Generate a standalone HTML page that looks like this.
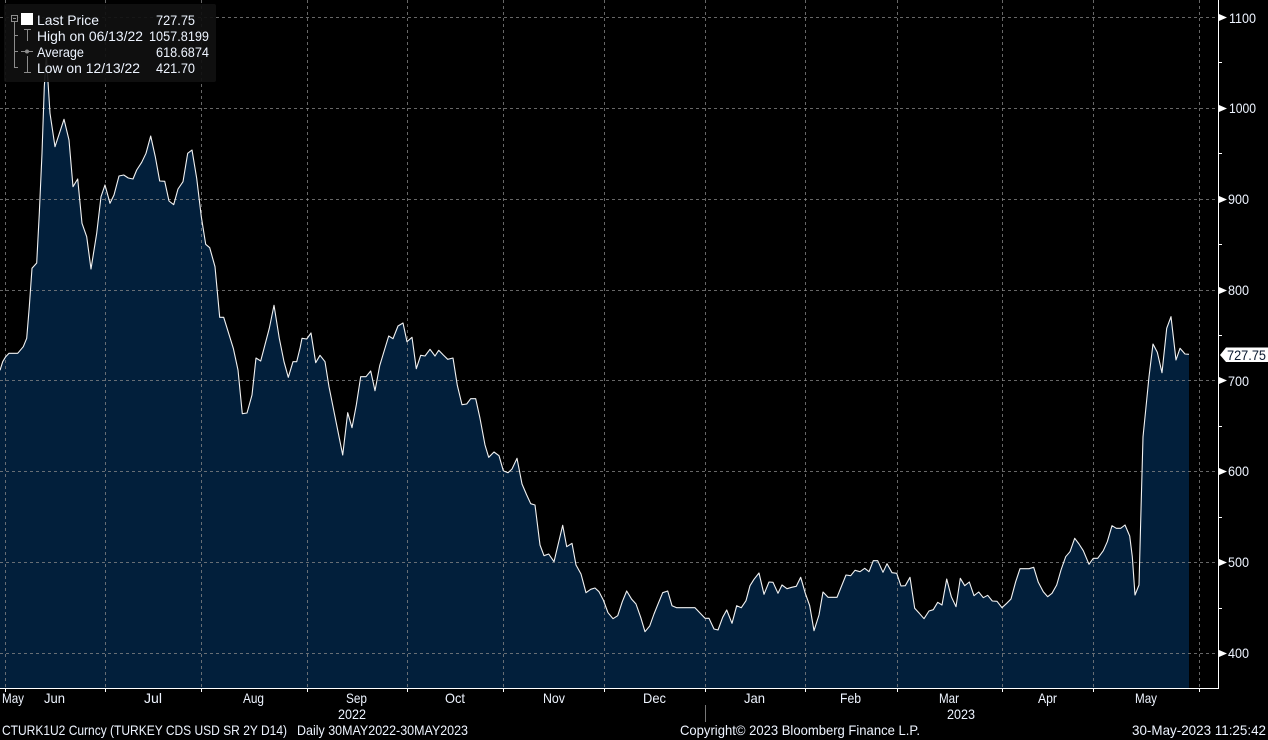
<!DOCTYPE html>
<html lang="en">
<head>
<meta charset="utf-8">
<title>CTURK1U2 Curncy</title>
<style>
html,body{margin:0;padding:0;background:#000;width:1268px;height:740px;overflow:hidden}
svg{display:block}
text{font-family:"Liberation Sans",sans-serif;font-size:14px;fill:#eef4ff}
</style>
</head>
<body>
<svg xmlns="http://www.w3.org/2000/svg" width="1268" height="740" viewBox="0 0 1268 740">
<rect width="1268" height="740" fill="#000"/>

<!-- area fill -->
<polygon fill="#021f3b" points="0,688 0,370.3 2.7,361.7 5.7,356.7 9,353.3 17.7,353.3 23.3,346.7 26.7,338.3 29.3,306.7 32,268.3 36.7,263 39.3,213.3 42,153.3 44.3,86.7 46.3,55 50,113.3 55,146.7 64,119.3 69,140 73,186.7 77.7,179 82,223.3 86.7,236.7 91,269 96.7,233.3 101,196.7 105,185 110,203.3 114,195 119,176 123.7,175 128.3,178 133,179 136.7,170 141.7,162.3 146,153.3 150.7,136 155.3,156.7 159.7,181 164.7,181.3 169,201 173.7,204.7 178,189 183,181.7 187.7,153.3 192,150 196.7,178.3 201.3,216.7 205.7,244.3 209.7,247.7 215,266.7 219.7,317.3 223.7,317.3 233.3,348.3 238,370 242.3,413.7 247,413 252,395 256,358 260.7,361 269.3,328.3 274,305.3 279.3,338.3 284,361.7 288.3,377.3 293,361.7 296.7,361.7 300,348.3 302,338.3 306.7,339 311,333 315.7,362.7 320,355.3 325,361.7 329,386.7 342.7,455 347.7,412.7 352,427.7 356.3,405 360.7,376.7 366,376.7 370.7,371 375,390.7 379.7,365.7 388.7,336 393,338.7 398,326 403,323 407,341.7 412,337.3 416.3,368.7 420.7,355.3 425,356 430,349.3 435,356 438.7,350.3 443.3,355 447.7,359.3 453,358 457.3,385.3 462,404.7 466.7,404 470.7,398.7 475.7,398.7 480,418.3 485,445 488.7,457.3 494,452 499,455.7 503.3,470.7 508,472.7 512,469 517,458.3 522,484 526.7,495 530.7,503.7 535,505 540,545 544,555.7 548.7,554 554,561.7 562.7,525.3 566.7,546.7 572,543.3 576,565 581,574 586,592.7 590.7,589.3 595,588 599,591.7 603.3,600 608,612.7 613,618.7 617.7,615.7 622.3,601.7 626.7,591 631.7,599.3 636,604 640.7,617.3 645,631.7 649.7,626 654,614 658.3,603.3 662.7,592.7 667.7,591 672,605.7 676.7,607.7 695,607.7 705,618.3 709,618.3 714,629 718,630 722.7,617.3 726.7,610 732,623.3 736.7,605.7 741.3,607.7 746,600.7 750,585.7 754,579.3 759,573 764,594.3 769,582 773,582.3 778,593.3 782,585 787,588.7 791.7,587.3 796.3,586.3 800.7,577.3 805.3,593.3 809.7,605.7 814,630.7 819,615 823,592 828,597.3 837,597.3 846,575 850.7,575.7 855,570.3 860,571.7 864.7,568.3 869,571.7 873.3,560.7 877.7,560.7 883,572.3 887,563.7 892,572.7 896.7,573.3 901,586 905.3,585.7 910,577.3 914.7,608.3 919.3,613.3 924,618.7 929,611 933.3,609.7 937.7,602.3 942,605 946.7,579 951.3,596.7 956,606.7 960.3,578.3 964.7,585.7 969.3,582 974,595.7 978.7,592 983.3,597.7 987.7,595.3 992.3,601 997,601.3 1002,607.7 1006.7,603.3 1011,599 1015.7,581.7 1020,568.7 1029,568.7 1033.7,567.3 1038.3,582.3 1043.3,591.7 1047.7,596.7 1052,593.3 1056.7,585 1061,570 1065.7,556.7 1070,551.7 1074.7,538.3 1079,544 1083.3,550.7 1089,564.3 1093.3,558.3 1097.7,558.3 1103.3,550.7 1107.3,541.7 1112,525.7 1116.3,528.3 1120.7,528.3 1125,525 1129.7,536 1132.3,556.7 1135,595 1139,585 1141,510 1143,437 1145.7,410 1149,376.7 1153,344 1157.3,352.3 1162,372.7 1166.7,328.3 1171,316.7 1176,360 1180,348.3 1185,354 1189,354.3 1189,688"/>

<!-- grid -->
<g stroke="#8a8a8a" stroke-opacity=".75" stroke-width="1" stroke-dasharray="3 3" fill="none">
<path d="M0 17.5H1218M0 108.5H1218M0 199.5H1218M0 290.5H1218M0 380.5H1218M0 471.5H1218M0 562.5H1218M0 653.5H1218"/>
<path d="M5.5 0V688M105.5 0V688M201.5 0V688M307.5 0V688M407.5 0V688M503.5 0V688M604.5 0V688M705.5 0V688M805.5 0V688M897.5 0V688M1002.5 0V688M1093.5 0V688M1199.5 0V688"/>
</g>

<!-- price line -->
<polyline fill="none" stroke="#f2f2f2" stroke-width="1.1" stroke-linejoin="round" points="0,370.3 2.7,361.7 5.7,356.7 9,353.3 17.7,353.3 23.3,346.7 26.7,338.3 29.3,306.7 32,268.3 36.7,263 39.3,213.3 42,153.3 44.3,86.7 46.3,55 50,113.3 55,146.7 64,119.3 69,140 73,186.7 77.7,179 82,223.3 86.7,236.7 91,269 96.7,233.3 101,196.7 105,185 110,203.3 114,195 119,176 123.7,175 128.3,178 133,179 136.7,170 141.7,162.3 146,153.3 150.7,136 155.3,156.7 159.7,181 164.7,181.3 169,201 173.7,204.7 178,189 183,181.7 187.7,153.3 192,150 196.7,178.3 201.3,216.7 205.7,244.3 209.7,247.7 215,266.7 219.7,317.3 223.7,317.3 233.3,348.3 238,370 242.3,413.7 247,413 252,395 256,358 260.7,361 269.3,328.3 274,305.3 279.3,338.3 284,361.7 288.3,377.3 293,361.7 296.7,361.7 300,348.3 302,338.3 306.7,339 311,333 315.7,362.7 320,355.3 325,361.7 329,386.7 342.7,455 347.7,412.7 352,427.7 356.3,405 360.7,376.7 366,376.7 370.7,371 375,390.7 379.7,365.7 388.7,336 393,338.7 398,326 403,323 407,341.7 412,337.3 416.3,368.7 420.7,355.3 425,356 430,349.3 435,356 438.7,350.3 443.3,355 447.7,359.3 453,358 457.3,385.3 462,404.7 466.7,404 470.7,398.7 475.7,398.7 480,418.3 485,445 488.7,457.3 494,452 499,455.7 503.3,470.7 508,472.7 512,469 517,458.3 522,484 526.7,495 530.7,503.7 535,505 540,545 544,555.7 548.7,554 554,561.7 562.7,525.3 566.7,546.7 572,543.3 576,565 581,574 586,592.7 590.7,589.3 595,588 599,591.7 603.3,600 608,612.7 613,618.7 617.7,615.7 622.3,601.7 626.7,591 631.7,599.3 636,604 640.7,617.3 645,631.7 649.7,626 654,614 658.3,603.3 662.7,592.7 667.7,591 672,605.7 676.7,607.7 695,607.7 705,618.3 709,618.3 714,629 718,630 722.7,617.3 726.7,610 732,623.3 736.7,605.7 741.3,607.7 746,600.7 750,585.7 754,579.3 759,573 764,594.3 769,582 773,582.3 778,593.3 782,585 787,588.7 791.7,587.3 796.3,586.3 800.7,577.3 805.3,593.3 809.7,605.7 814,630.7 819,615 823,592 828,597.3 837,597.3 846,575 850.7,575.7 855,570.3 860,571.7 864.7,568.3 869,571.7 873.3,560.7 877.7,560.7 883,572.3 887,563.7 892,572.7 896.7,573.3 901,586 905.3,585.7 910,577.3 914.7,608.3 919.3,613.3 924,618.7 929,611 933.3,609.7 937.7,602.3 942,605 946.7,579 951.3,596.7 956,606.7 960.3,578.3 964.7,585.7 969.3,582 974,595.7 978.7,592 983.3,597.7 987.7,595.3 992.3,601 997,601.3 1002,607.7 1006.7,603.3 1011,599 1015.7,581.7 1020,568.7 1029,568.7 1033.7,567.3 1038.3,582.3 1043.3,591.7 1047.7,596.7 1052,593.3 1056.7,585 1061,570 1065.7,556.7 1070,551.7 1074.7,538.3 1079,544 1083.3,550.7 1089,564.3 1093.3,558.3 1097.7,558.3 1103.3,550.7 1107.3,541.7 1112,525.7 1116.3,528.3 1120.7,528.3 1125,525 1129.7,536 1132.3,556.7 1135,595 1139,585 1141,510 1143,437 1145.7,410 1149,376.7 1153,344 1157.3,352.3 1162,372.7 1166.7,328.3 1171,316.7 1176,360 1180,348.3 1185,354 1189,354.3"/>

<!-- axes -->
<path d="M1218.5 0V688.5H0" fill="none" stroke="#fff" stroke-width="1"/>
<path d="M5.5 688V692M105.5 688V692M201.5 688V692M307.5 688V692M407.5 688V692M503.5 688V692M604.5 688V692M705.5 688V692M805.5 688V692M897.5 688V692M1002.5 688V692M1093.5 688V692M1199.5 688V692" stroke="#fff" stroke-width="1"/>
<path d="M1219 62.5H1222M1219 153.5H1222M1219 244.5H1222M1219 335.5H1222M1219 426.5H1222M1219 517.5H1222M1219 608.5H1222" stroke="#fff" stroke-width="1"/>
<g fill="#fff">
<polygon points="1219,14 1227,17.5 1219,21"/>
<polygon points="1219,105 1227,108.5 1219,112"/>
<polygon points="1219,196 1227,199.5 1219,203"/>
<polygon points="1219,287 1227,290.5 1219,294"/>
<polygon points="1219,377 1227,380.5 1219,384"/>
<polygon points="1219,468 1227,471.5 1219,475"/>
<polygon points="1219,559 1227,562.5 1219,566"/>
<polygon points="1219,650 1227,653.5 1219,657"/>
</g>

<!-- y labels -->
<text x="1229" y="23" textLength="27" lengthAdjust="spacingAndGlyphs">1100</text>
<text x="1229" y="113" textLength="27" lengthAdjust="spacingAndGlyphs">1000</text>
<text x="1228" y="204" textLength="21" lengthAdjust="spacingAndGlyphs">900</text>
<text x="1228" y="295" textLength="21" lengthAdjust="spacingAndGlyphs">800</text>
<text x="1228" y="386" textLength="21" lengthAdjust="spacingAndGlyphs">700</text>
<text x="1228" y="476" textLength="21" lengthAdjust="spacingAndGlyphs">600</text>
<text x="1228" y="567" textLength="21" lengthAdjust="spacingAndGlyphs">500</text>
<text x="1228" y="658" textLength="21" lengthAdjust="spacingAndGlyphs">400</text>

<!-- last price tag -->
<polygon points="1220,355 1226,347.5 1268,347.5 1268,362 1226,362" fill="#fff"/>
<text x="1227" y="360" textLength="39" lengthAdjust="spacingAndGlyphs" style="fill:#0a1a30">727.75</text>

<!-- month labels -->
<text x="2" y="703" textLength="22" lengthAdjust="spacingAndGlyphs">May</text>
<text x="44" y="703" textLength="21" lengthAdjust="spacingAndGlyphs">Jun</text>
<text x="144" y="703" textLength="18" lengthAdjust="spacingAndGlyphs">Jul</text>
<text x="243" y="703" textLength="21" lengthAdjust="spacingAndGlyphs">Aug</text>
<text x="346" y="703" textLength="21" lengthAdjust="spacingAndGlyphs">Sep</text>
<text x="445" y="703" textLength="20" lengthAdjust="spacingAndGlyphs">Oct</text>
<text x="543" y="703" textLength="22" lengthAdjust="spacingAndGlyphs">Nov</text>
<text x="643" y="703" textLength="23" lengthAdjust="spacingAndGlyphs">Dec</text>
<text x="744" y="703" textLength="21" lengthAdjust="spacingAndGlyphs">Jan</text>
<text x="840" y="703" textLength="21" lengthAdjust="spacingAndGlyphs">Feb</text>
<text x="939" y="703" textLength="20" lengthAdjust="spacingAndGlyphs">Mar</text>
<text x="1038" y="703" textLength="19" lengthAdjust="spacingAndGlyphs">Apr</text>
<text x="1135" y="703" textLength="22" lengthAdjust="spacingAndGlyphs">May</text>
<text x="338" y="719" textLength="28" lengthAdjust="spacingAndGlyphs">2022</text>
<text x="947" y="719" textLength="28" lengthAdjust="spacingAndGlyphs">2023</text>
<path d="M705.5 705V722" stroke="#777" stroke-width="1"/>

<!-- footer -->
<text x="2" y="735" textLength="285" lengthAdjust="spacingAndGlyphs">CTURK1U2 Curncy (TURKEY CDS USD SR 2Y D14)</text>
<text x="297" y="735" textLength="171" lengthAdjust="spacingAndGlyphs">Daily 30MAY2022-30MAY2023</text>
<text x="680" y="735" textLength="240" lengthAdjust="spacingAndGlyphs">Copyright© 2023 Bloomberg Finance L.P.</text>
<text x="1132" y="735" textLength="134" lengthAdjust="spacingAndGlyphs">30-May-2023 11:25:42</text>

<!-- legend -->
<rect x="4" y="4" width="212" height="78" rx="2" fill="#101010" fill-opacity=".92"/>
<rect x="21" y="13" width="12" height="12" fill="#fff"/>
<g fill="none" stroke="#8c8c8c" stroke-width="1">
<rect x="11.5" y="15.5" width="6" height="6"/>
<path d="M13 18.5H16"/>
<path d="M14.5 21.5V67.5H18M14.5 35.5H18M14.5 51.5H18"/>
<path d="M24 29.5H31M27.5 29.5V41"/>
<path d="M21 51.5H33"/>
<path d="M27.5 56V72M24 72.5H31"/>
</g>
<circle cx="27" cy="51.5" r="2" fill="#8c8c8c"/>
<text x="37" y="25" textLength="62" lengthAdjust="spacingAndGlyphs">Last Price</text>
<text x="37" y="41" textLength="106" lengthAdjust="spacingAndGlyphs">High on 06/13/22</text>
<text x="37" y="57" textLength="47" lengthAdjust="spacingAndGlyphs">Average</text>
<text x="37" y="73" textLength="103" lengthAdjust="spacingAndGlyphs">Low on 12/13/22</text>
<text x="156" y="25" textLength="39" lengthAdjust="spacingAndGlyphs">727.75</text>
<text x="149" y="41" textLength="60" lengthAdjust="spacingAndGlyphs">1057.8199</text>
<text x="156" y="57" textLength="53" lengthAdjust="spacingAndGlyphs">618.6874</text>
<text x="156" y="73" textLength="39" lengthAdjust="spacingAndGlyphs">421.70</text>
</svg>
</body>
</html>
